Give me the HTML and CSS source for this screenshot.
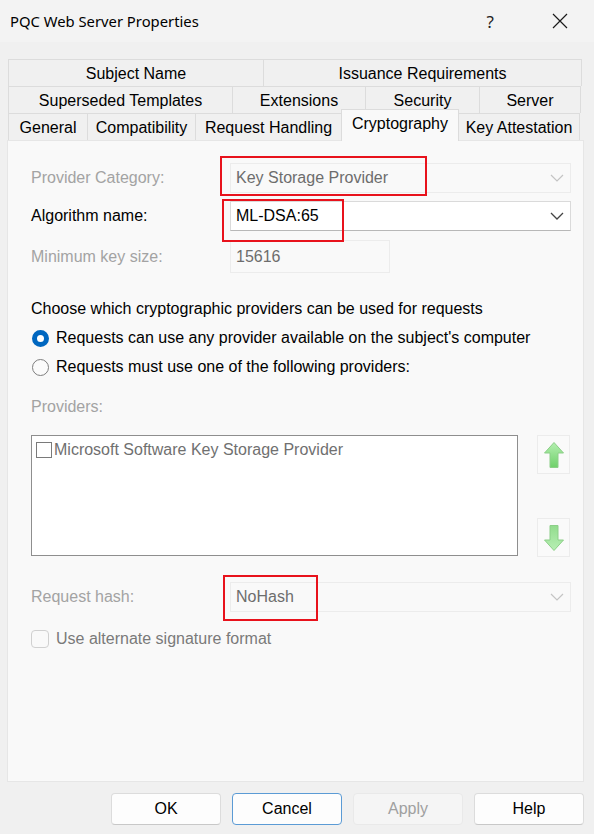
FILE: index.html
```html
<!DOCTYPE html>
<html>
<head>
<meta charset="utf-8">
<link rel="stylesheet" href="styles.css">
</head>
<body>
<div class="window">
  <div class="titlebar">
    <span class="title">PQC Web Server Properties</span>
    <span class="help">?</span>
    <svg class="close" width="16" height="16" viewBox="0 0 16 16"><path d="M1 1 L15 15 M15 1 L1 15" stroke="#1a1a1a" stroke-width="1.2" fill="none"/></svg>
  </div>

  <div class="tabs">
    <div class="tabrow">
      <div class="tab t-subject">Subject Name</div>
      <div class="tab t-issuance">Issuance Requirements</div>
    </div>
    <div class="tabrow">
      <div class="tab t-superseded">Superseded Templates</div>
      <div class="tab t-extensions">Extensions</div>
      <div class="tab t-security">Security</div>
      <div class="tab t-server">Server</div>
    </div>
    <div class="tabrow front">
      <div class="tab t-general">General</div>
      <div class="tab t-compat">Compatibility</div>
      <div class="tab t-request">Request Handling</div>
      <div class="tab t-crypto selected">Cryptography</div>
      <div class="tab t-attest">Key Attestation</div>
    </div>
  </div>

  <div class="panel">
    <div class="formgrid">
      <div class="label disabled">Provider Category:</div>
      <div class="combo off">
        <span>Key Storage Provider</span>
        <svg class="chev" width="14" height="8" viewBox="0 0 14 8"><path d="M1 1 L7 7 L13 1" stroke="#c4c4c4" stroke-width="1.2" fill="none"/></svg>
        <div class="mark mark-cat"></div>
      </div>

      <div class="label">Algorithm name:</div>
      <div class="combo on">
        <span>ML-DSA:65</span>
        <svg class="chev" width="14" height="8" viewBox="0 0 14 8"><path d="M1 1 L7 7 L13 1" stroke="#444" stroke-width="1.3" fill="none"/></svg>
        <div class="mark mark-alg"></div>
      </div>

      <div class="label disabled lbl-min">Minimum key size:</div>
      <div class="keysize">15616</div>
    </div>

    <p class="choose">Choose which cryptographic providers can be used for requests</p>
    <div class="radio-row">
      <span class="radio checked"></span>
      <span>Requests can use any provider available on the subject's computer</span>
    </div>
    <div class="radio-row">
      <span class="radio"></span>
      <span>Requests must use one of the following providers:</span>
    </div>

    <div class="label disabled providers-lbl">Providers:</div>
    <div class="providers">
      <div class="listbox">
        <div class="item"><span class="sqbox"></span>Microsoft Software Key Storage Provider</div>
      </div>
      <div class="arrows">
        <div class="arrowbtn">
          <svg width="22" height="28" viewBox="0 0 22 28">
            <defs><linearGradient id="gu" x1="0" y1="0" x2="0" y2="1"><stop offset="0" stop-color="#b4efb0"/><stop offset="1" stop-color="#6fd06a"/></linearGradient></defs>
            <path d="M11 1.5 L20.5 12 L15 12 L15 26.5 L7 26.5 L7 12 L1.5 12 Z" fill="url(#gu)" stroke="#8ccf88" stroke-width="1" stroke-linejoin="round"/>
          </svg>
        </div>
        <div class="arrowbtn">
          <svg width="22" height="28" viewBox="0 0 22 28">
            <defs><linearGradient id="gd" x1="0" y1="0" x2="0" y2="1"><stop offset="0" stop-color="#92dc8d"/><stop offset="1" stop-color="#b8efb4"/></linearGradient></defs>
            <path d="M11 26.5 L20.5 16 L15 16 L15 1.5 L7 1.5 L7 16 L1.5 16 Z" fill="url(#gd)" stroke="#8ccf88" stroke-width="1" stroke-linejoin="round"/>
          </svg>
        </div>
      </div>
    </div>

    <div class="formgrid hashgrid">
      <div class="label disabled">Request hash:</div>
      <div class="combo off">
        <span>NoHash</span>
        <svg class="chev" width="14" height="8" viewBox="0 0 14 8"><path d="M1 1 L7 7 L13 1" stroke="#c4c4c4" stroke-width="1.2" fill="none"/></svg>
        <div class="mark mark-hash"></div>
      </div>
    </div>

    <div class="check-row">
      <span class="chk"></span>
      <span>Use alternate signature format</span>
    </div>
  </div>

  <div class="buttons">
    <button class="btn">OK</button>
    <button class="btn focus">Cancel</button>
    <button class="btn dis">Apply</button>
    <button class="btn">Help</button>
  </div>
</div>
</body>
</html>
```

FILE: styles.css
```css
* { box-sizing: border-box; }
html, body { margin: 0; padding: 0; }
body {
  width: 594px;
  height: 834px;
  background: #f0f0f0;
  font-family: "Liberation Sans", Arial, sans-serif;
  font-size: 16px;
  color: #000;
  overflow: hidden;
}
.window { width: 594px; height: 834px; display: flex; flex-direction: column; }

.titlebar {
  height: 42px;
  background: #f3f3f3;
  display: flex;
  align-items: center;
  padding-left: 10px;
}
.title {
  font-family: "Noto Sans", sans-serif;
  font-size: 14.8px;
  flex: 1;
  margin-top: -1px;
}
.help {
  font-family: "Noto Sans", sans-serif;
  font-size: 17px;
  color: #222;
  margin-right: 58px;
}
.close { margin-right: 26px; }

.tabs { margin: 17px 0 0 8px; width: 574px; display: flex; flex-direction: column; }
.tabrow { display: flex; height: 27px; }
.tab {
  height: 27px;
  border: 1px solid #dcdcdc;
  border-bottom: none;
  margin-right: -1px;
  background: #f0f0f0;
  display: flex;
  align-items: center;
  justify-content: center;
  white-space: nowrap;
  padding-top: 1px;
}
.tabrow.front { align-items: flex-end; position: relative; z-index: 2; }
.tab.selected {
  height: 32px;
  background: #f9f9f9;
  margin-bottom: -1px;
  padding-bottom: 4px;
}
.t-subject { width: 256px; }
.t-issuance { width: 319px; }
.t-superseded { width: 225px; }
.t-extensions { width: 134px; }
.t-security { width: 115px; }
.t-server { width: 102px; }
.t-general { width: 80px; }
.t-compat { width: 109px; }
.t-request { width: 147px; }
.t-crypto { width: 118px; }
.t-attest { width: 122px; }

.panel {
  margin-left: 7px;
  width: 577px;
  height: 642px;
  background: #f9f9f9;
  border: 1px solid #e6e6e6;
  padding: 22px 12px 0 23px;
  display: flex;
  flex-direction: column;
}

.formgrid {
  display: grid;
  grid-template-columns: 199px 341px;
  row-gap: 8px;
  align-items: center;
}
.label { white-space: nowrap; }
.disabled { color: #a3a3a3; }
.lbl-min { margin-top: 1px; }

.combo {
  position: relative;
  height: 30px;
  display: flex;
  align-items: center;
  padding-left: 5px;
}
.combo.off { border: 1px solid #ececec; color: #6d6d6d; }
.combo.on { background: #fff; border: 1px solid #dadada; border-bottom-color: #b8b8b8; }
.combo span { flex: 1; }
.chev { margin-right: 6px; }

.keysize {
  width: 160px;
  height: 33px;
  border: 1px solid #ececec;
  color: #6d6d6d;
  padding-left: 5px;
  display: flex;
  align-items: center;
  margin-top: 1px;
}

.mark { position: absolute; border: 2px solid #e8121c; pointer-events: none; }
.mark-cat { left: -11px; top: -8px; width: 207px; height: 40px; }
.mark-alg { left: -9px; top: -3px; width: 122px; height: 43px; }
.mark-hash { left: -8px; top: -8px; width: 95px; height: 46px; }

.choose { margin: 26px 0 0 0; line-height: 20px; }
.radio-row { display: flex; align-items: center; height: 20px; margin-top: 9px; }
.radio-row span:last-child { margin-left: 7px; }
.radio-row + .radio-row { margin-top: 9px; }
.radio {
  width: 17px; height: 17px;
  border-radius: 50%;
  border: 1px solid #7e7e7e;
  background: #fbfbfb;
  margin-left: 1px;
  flex: none;
}
.radio.checked {
  border: 5px solid #0067c0;
  background: #fff;
}

.providers-lbl { margin-top: 20px; line-height: 20px; }
.providers { display: flex; margin-top: 18px; }
.listbox {
  width: 487px;
  height: 121px;
  background: #fff;
  border: 1px solid #8e8e8e;
  padding: 5px 0 0 4px;
}
.item { display: flex; align-items: center; color: #707070; line-height: 18px; }
.sqbox {
  width: 16px; height: 16px;
  border: 1px solid #7a7a7a;
  margin-right: 2px;
  flex: none;
}
.arrows {
  margin-left: 19px;
  display: flex;
  flex-direction: column;
  justify-content: space-between;
  height: 122px;
}
.arrowbtn {
  width: 33px;
  height: 39px;
  border: 1px solid #ececec;
  background: #fafafa;
  display: flex;
  align-items: center;
  justify-content: center;
}

.hashgrid { margin-top: 25px; }

.check-row { display: flex; align-items: center; margin-top: 18px; color: #7a7a7a; }
.chk {
  width: 18px; height: 18px;
  border: 1px solid #d0d0d0;
  border-radius: 4px;
  background: #f9f9f9;
  margin-right: 7px;
  flex: none;
}

.buttons {
  display: flex;
  justify-content: flex-end;
  gap: 11px;
  padding-right: 10px;
  margin-top: 11px;
}
.btn {
  width: 110px;
  height: 32px;
  font-family: "Liberation Sans", Arial, sans-serif;
  font-size: 16px;
  color: #000;
  background: #fdfdfd;
  border: 1px solid #dcdcdc;
  border-bottom-color: #c8c8c8;
  border-radius: 4px;
  padding: 0;
}
.btn.focus { border: 1px solid #5b9bd5; background: #fdfdfd; }
.btn.dis { color: #a0a0a0; background: #f5f5f5; border-color: #e9e9e9; }
```
